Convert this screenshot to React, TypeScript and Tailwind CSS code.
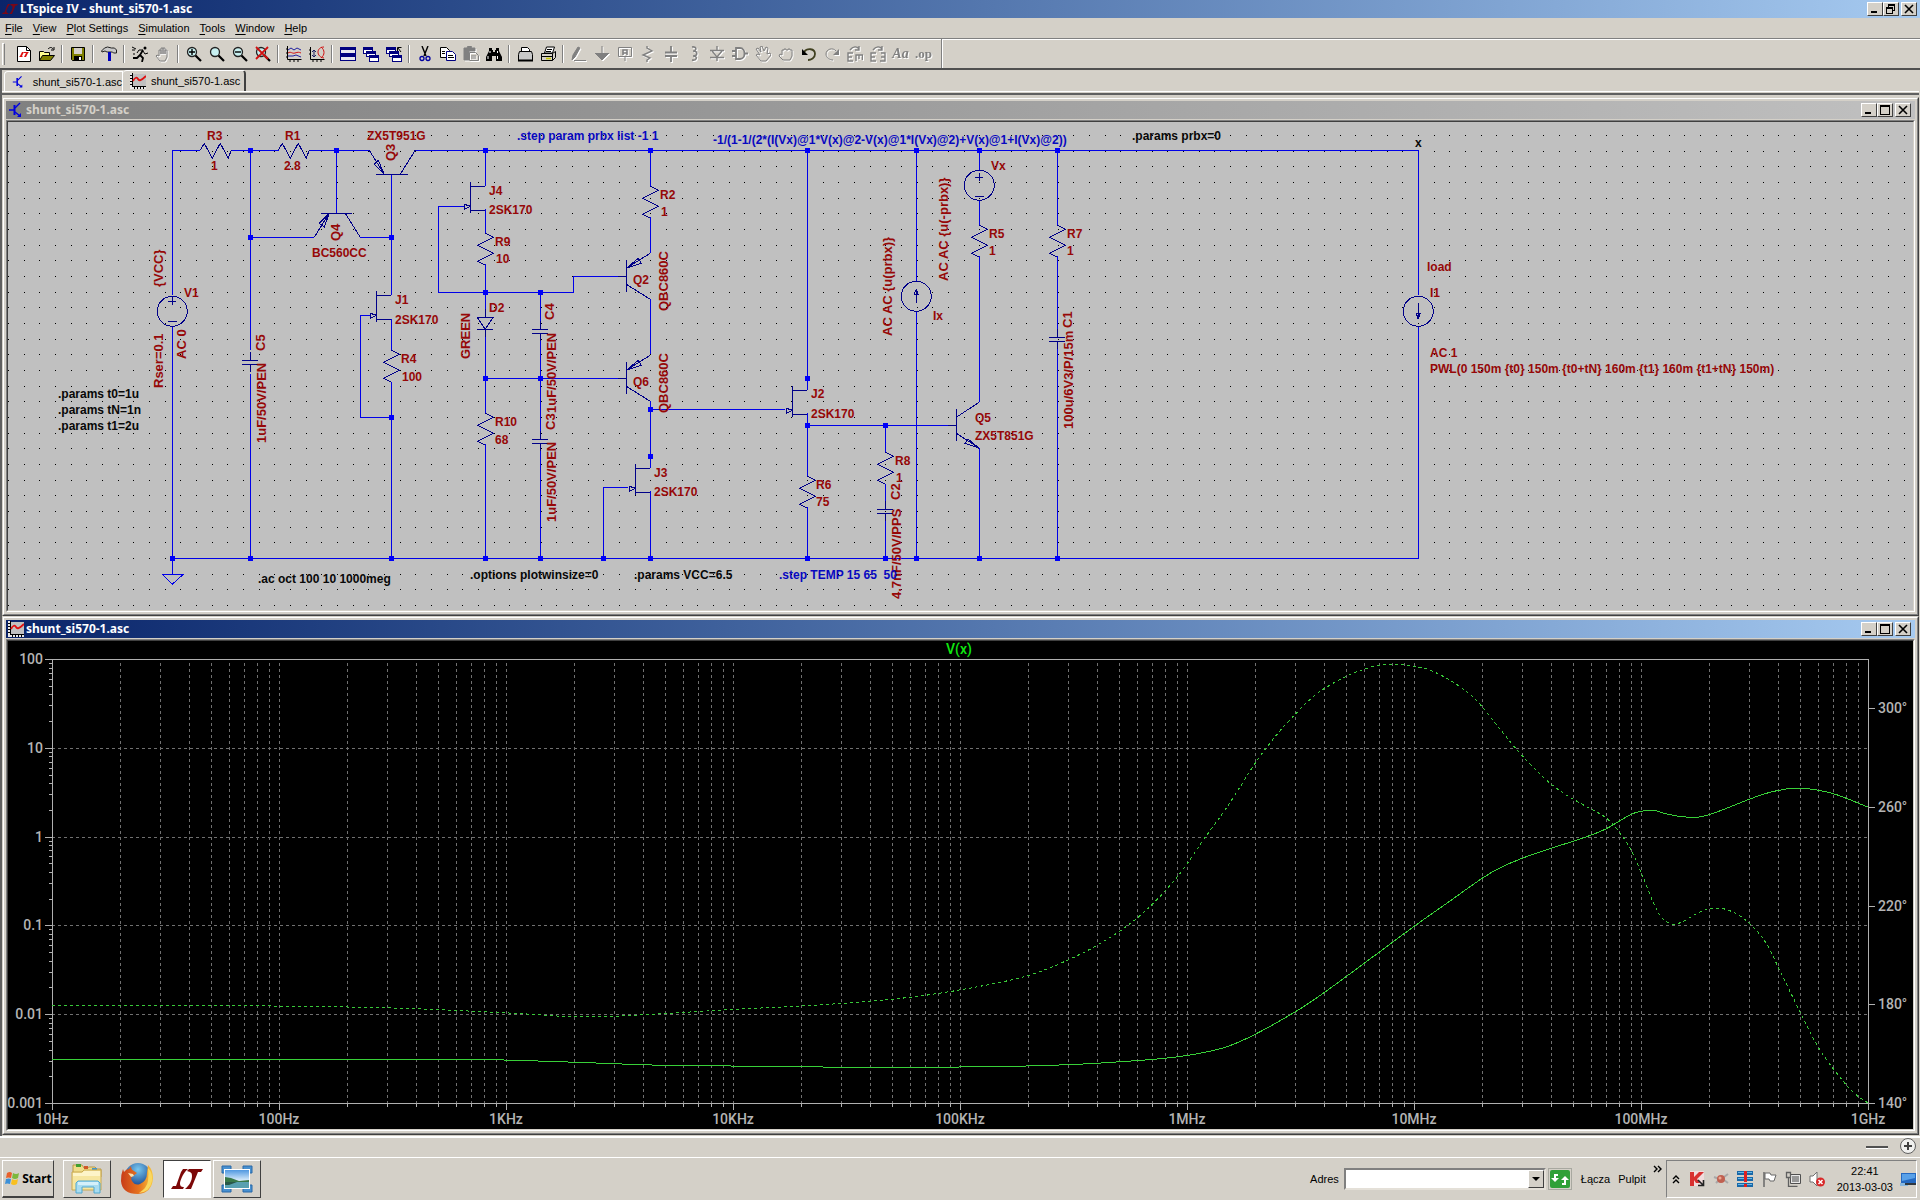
import React from "react";

type Pt = [number, number];

/* ---------- chrome ---------- */

const raised =
  "border border-t-white border-l-white border-r-[#404040] border-b-[#404040] bg-[#d4d0c8]";

function WindowButtons() {
  const cls = `${raised} flex h-[14px] w-4 items-center justify-center`;
  return (
    <div className="flex items-center">
      <button type="button" aria-label="Minimize" className={cls}>
        <svg width="12" height="10" shapeRendering="crispEdges"><path d="M2 7h6v2h-6z" /></svg>
      </button>
      <button type="button" aria-label="Maximize" className={cls}>
        <svg width="12" height="10" shapeRendering="crispEdges">
          <path d="M1 0h10v10h-10zM2 2v7h8v-7z" fillRule="evenodd" />
        </svg>
      </button>
      <button type="button" aria-label="Close" className={`${cls} ml-0.5`}>
        <svg width="12" height="10"><path d="M2 1l8 8M10 1l-8 8" stroke="#000" strokeWidth="1.6" /></svg>
      </button>
    </div>
  );
}

function RestoreButtons() {
  const cls = `${raised} flex h-[14px] w-4 items-center justify-center`;
  return (
    <div className="flex items-center">
      <button type="button" aria-label="Minimize application" className={cls}>
        <svg width="12" height="10" shapeRendering="crispEdges"><path d="M2 7h6v2h-6z" /></svg>
      </button>
      <button type="button" aria-label="Restore application" className={cls}>
        <svg width="12" height="10" shapeRendering="crispEdges">
          <path d="M3 0h7v7h-2v-1h1v-4h-5v1h-1zM1 3h7v7h-7zM2 5v4h5v-4z" fillRule="evenodd" />
        </svg>
      </button>
      <button type="button" aria-label="Close application" className={`${cls} ml-0.5`}>
        <svg width="12" height="10"><path d="M2 1l8 8M10 1l-8 8" stroke="#000" strokeWidth="1.6" /></svg>
      </button>
    </div>
  );
}

function LtLogo({ size, color }: { size: number; color: string }) {
  return (
    <svg width={size} height={size} viewBox="0 0 32 32" fill={color}>
      <path d="M12 6h5C13 9 10 15 9 20c0 3 1 4 4 4l-1 2H0l2-3h3L10 9z" />
      <path d="M18 6h14l-2 3h-3l-7 17h-6c5-4 7-9 7-13 0-3-1-4-5-5z" />
    </svg>
  );
}

function TransistorIcon() {
  return (
    <svg width="16" height="16" viewBox="0 0 16 16" stroke="#0000e0" fill="none" strokeWidth="1.4">
      <path d="M1 8h5M12 1L7 6M7 10l5 4" />
      <path d="M6.500 3v10" strokeWidth="2" />
      <path d="M13 15v-4l-4 4z" fill="#0000e0" stroke="none" />
    </svg>
  );
}

function WaveIcon() {
  return (
    <svg width="16" height="16" viewBox="0 0 16 16">
      <path d="M2 1h14v12H2z" fill="#c0c0c0" />
      <path d="M0 0h2v13H0zM0 13h16v3H0z" fill="#e8e8e8" />
      <path d="M2.500 0v13.500h14M0 2.500h2M0 5.500h2M0 8.500h2M0 11.500h2M4.500 13v3M7.500 13v3M10.500 13v3M13.500 13v3" stroke="#000" fill="none" shapeRendering="crispEdges" />
      <path d="M3 8c2-4 4-4 5-2s3 2 8-3" stroke="#e01010" strokeWidth="1.800" fill="none" />
    </svg>
  );
}

const menus = ["File", "View", "Plot Settings", "Simulation", "Tools", "Window", "Help"];

/* ---------- toolbar ---------- */

const lens = (
  <>
    <circle cx="6" cy="6" r="4.500" fill="#c8f0f0" stroke="#222" strokeWidth="1.300" />
    <path d="M9.500 9.500l5.500 5.500" stroke="#000" strokeWidth="2.200" />
  </>
);

const cascade = (
  <g shapeRendering="crispEdges">
    <path d="M0 1h10v7H0zM3 5h10v6H3zM6 9h10v7H6z" fill="#000080" />
    <path d="M1 4h2v3H1zM4 8h2v2H4zM7 12h8v3H7z" fill="#fff" />
    <path d="M3 4h6v1H3zM6 8h6v1H6z" fill="#fff" />
  </g>
);

const hand = "M5 15l-4-5 1-1 2 1V4h2v4-6h2v6-6h2v6-4h2v7l-2 4z";

type Tool = { name: string; art?: React.ReactNode; off?: boolean };

const tools: (Tool | null)[] = [
  {
    name: "New schematic",
    art: (
      <>
        <path d="M1.500.5h9l4 4v11h-13z" fill="#fff" stroke="#000" />
        <path d="M10.500.5v4h4" fill="none" stroke="#000" />
        <path d="M6 6h2l-2 4h1l-1 1H3l1-1zM8 6h5l-1 1-2 4H8l2-4H8z" fill="#e01010" />
      </>
    ),
  },
  {
    name: "Open",
    art: (
      <>
        <path d="M.5 14.500v-9h4l1 1h5v3" fill="#ffff90" stroke="#000" />
        <path d="M.5 14.500l3-5h12l-4 5z" fill="#808000" stroke="#000" />
        <path d="M9 3c2-2 4-2 5 0M15 1v3h-3" fill="none" stroke="#000" />
      </>
    ),
  },
  null,
  {
    name: "Save",
    art: (
      <>
        <path d="M1.500 1.500h13v13h-12l-1-1z" fill="#808000" stroke="#000" />
        <path d="M4 2h8v6H4z" fill="#d4d0c8" />
        <path d="M4 10h8v4H4z" fill="#000" />
        <path d="M9 11h2v3H9z" fill="#fff" />
      </>
    ),
  },
  null,
  {
    name: "Control panel",
    art: (
      <>
        <path d="M.5 5l3-3 3-1 4 1h3l2 2v3h-3l-1-1H6L4 5 1 6z" fill="#c8c8c8" stroke="#222" />
        <path d="M7 6h3v9H7z" fill="#0000c0" />
      </>
    ),
  },
  null,
  {
    name: "Run",
    art: (
      <>
        <circle cx="13" cy="2" r="1.500" fill="#000" />
        <path d="M11 4L8 9l3 3-1 4M8 9l-3 3H1" fill="none" stroke="#000" strokeWidth="1.800" />
        <path d="M11 4L7 4 5 7M11 5l2 3 3-1M0 1l4 2M0 4h3M1 8h2" fill="none" stroke="#000" />
      </>
    ),
  },
  { name: "Halt", off: true, art: <path d={hand} /> },
  null,
  { name: "Zoom in", art: <>{lens}<path d="M3 6h6M6 3v6" stroke="#000" strokeWidth="1.400" /></> },
  { name: "Pan", art: lens },
  { name: "Zoom back", art: <>{lens}<path d="M3 6h6" stroke="#000" strokeWidth="1.400" /></> },
  { name: "Zoom full extents", art: <>{lens}<path d="M1 1l12 12M13 1L1 13" stroke="#d01010" strokeWidth="1.800" /></> },
  null,
  {
    name: "Autorange",
    art: (
      <g fill="none">
        <path d="M1.500 0v13.500h14M0 3h2M0 7h2M0 11h2M4 13v3M8 13v3M12 13v3" stroke="#000" />
        <path d="M2 4l3-2 3 2 3-2 4 2" stroke="#2020a0" />
        <path d="M2 7c3-2 4 1 7 0s4-1 6 0" stroke="#d01010" />
        <path d="M2 10h5l3-1 5 2" stroke="#2020a0" />
      </g>
    ),
  },
  {
    name: "Plot settings",
    art: (
      <g fill="none">
        <path d="M1.500 1v12.500h14M0 4h2M0 8h2M4 13v3M8 13v3M12 13v3" stroke="#000" />
        <path d="M5 4v7M3 6l2-2 2 2M3 9l2 2 2-2" stroke="#202060" />
        <path d="M15 1c-8 0-8 10 0 11M12 1c4 3 4 8 0 11" stroke="#d01010" />
      </g>
    ),
  },
  null,
  {
    name: "Tile windows",
    art: (
      <g shapeRendering="crispEdges">
        <path d="M0 1h16v14H0z" fill="#000080" />
        <path d="M1 4h14v3H1zM1 11h14v3H1z" fill="#e8e8f0" />
      </g>
    ),
  },
  { name: "Cascade windows", art: cascade },
  { name: "Close all windows", art: <>{cascade}<path d="M15 6l-3-4M11.500 5V1.500h4" stroke="#000" fill="none" /></> },
  null,
  {
    name: "Cut",
    art: (
      <g fill="none">
        <path d="M5 0l4 10M11 0L7 10" stroke="#000" strokeWidth="1.400" />
        <circle cx="5" cy="12.500" r="2" stroke="#0000a0" strokeWidth="1.300" />
        <circle cx="11" cy="12.500" r="2" stroke="#0000a0" strokeWidth="1.300" />
      </g>
    ),
  },
  {
    name: "Copy",
    art: (
      <g fill="#fff" stroke="#000">
        <path d="M.5 1.500h6l3 3v7h-9z" />
        <path d="M6.500 5.500h6l3 3v6h-9z" stroke="#000080" />
        <path d="M8 9.500h5M8 11.500h6M2 5.500h3M2 7.500h3" />
      </g>
    ),
  },
  {
    name: "Paste",
    off: true,
    art: (
      <>
        <path d="M1 2h3l1-2h3l1 2h3v3H6v9H1z" fill="#808080" />
        <path d="M6.500 6.500h6l3 3v5h-9zM8 10h5M8 12h5" />
      </>
    ),
  },
  {
    name: "Find",
    art: (
      <>
        <path d="M3 2h3v2h1v2h2V4h1V2h3v3l3 6v4h-6v-5H6v5H0v-4l3-6z" fill="#000" />
        <path d="M4 5v2M11.500 5v2M2 10v3M11.500 10v3" stroke="#fff" />
      </>
    ),
  },
  null,
  {
    name: "Print preview",
    art: (
      <g stroke="#000" fill="#fff">
        <path d="M4.500 5.500v-4h6l2 2v2" />
        <path d="M2.500 5.500h12l1 3v6h-14v-6z" fill="#c8c8c8" />
        <path d="M1 14.500h15" strokeWidth="2" />
      </g>
    ),
  },
  {
    name: "Print",
    art: (
      <g stroke="#000" fill="#fff">
        <path d="M4.500 7l2-6h8l-2 6z" />
        <path d="M1.500 7.500h11l3-2v6l-3 3h-11z" fill="#d4d0c8" />
        <path d="M1 10.500h12M7 3.500h5M6 5.500h5M12.500 7.500v7" />
        <path d="M6 12.500h5" stroke="#c8c800" strokeWidth="1.600" />
      </g>
    ),
  },
  null,
  { name: "Wire", off: true, art: <><path d="M1 14l1-5 5-8 2 1-5 9z" fill="#808080" /><path d="M3 14.500h12" /></> },
  { name: "Ground", off: true, art: <><path d="M8 0v8M1 7.500h14" /><path d="M2 8h12l-6 6z" fill="#808080" /></> },
  { name: "Label net", off: true, art: <><path d="M1.500 1.500h13v9h-13zM8 11v4" /><path d="M6 9V4h4v5M6 7h4" strokeWidth="1.600" /></> },
  { name: "Resistor", off: true, art: <path d="M7 0v2l5 3-9 4 7 3-3 2v2" strokeWidth="1.400" /> },
  { name: "Capacitor", off: true, art: <path d="M8 0v6M8 10v6M2 6.500h12M2 10h12" strokeWidth="1.800" /> },
  { name: "Inductor", off: true, art: <path d="M6 1c5-1 5 4 1 4 5 0 5 5 0 5 5 0 4 5-1 4" strokeWidth="1.600" /> },
  { name: "Diode", off: true, art: <path d="M8 0v4M1 4.500h14M3 5l5 6 5-6M1 11.500h14M8 11v4" strokeWidth="1.400" /> },
  { name: "Component", off: true, art: <path d="M0 5h4M0 10h4M4 2h4c6 0 6 11 0 11H4zM12 7.500h4" strokeWidth="1.800" /> },
  { name: "Move", off: true, art: <path d="M6 15L1 9l2-1 2 1-4-6 2-1 3 4-1-5 2-1 2 5 2-4 2 1-1 6 3-1 1 2-5 6z" /> },
  { name: "Drag", off: true, art: <path d="M5 14l-4-4 1-2 2 1V4h2V3h2v1h2V3h2v1h2v6l-2 4z" /> },
  {
    name: "Undo",
    art: <><path d="M3 6c3-4 11-4 11 2 0 4-4 6-7 6" stroke="#404020" strokeWidth="1.800" fill="none" /><path d="M1 3v6h6z" fill="#000" /></>,
  },
  { name: "Redo", off: true, art: <><path d="M12 5C9 1 2 3 2 8c0 4 4 6 7 6" /><path d="M15 3v6H9z" fill="#808080" stroke="none" /></> },
  { name: "Rotate", off: true, art: <path d="M6 7H1v8h5M1 11h4M9 15V9h7M12 9v4M15.500 9v5M3 4c3-4 7-4 9-1M12 0v4H8" strokeWidth="1.400" /> },
  { name: "Mirror", off: true, art: <path d="M6 7H1v8h5M1 11h4M11 7h4v8h-5M15 11h-4M3 4c3-4 7-4 9-1M12 0v4H8" strokeWidth="1.400" /> },
  { name: "Text" },
  { name: "SPICE directive" },
];

function Toolbar() {
  return (
    <div className="flex h-8 items-center border-t border-t-[#808080] border-b-2 border-b-[#505050] pl-0.5 shadow-[inset_0_1px_0_#ffffff]">
      <span className="h-[22px] w-[3px] border-t border-r border-l border-t-white border-r-[#808080] border-l-white" />
      <span className="w-[7px]" />
      {tools.map((t, i) =>
        t === null ? (
          <span key={i} className="flex w-2 justify-center">
            <span className="h-[18px] w-0.5 border-l border-r border-l-[#808080] border-r-white" />
          </span>
        ) : (
          <button key={i} type="button" aria-label={t.name} disabled={t.off} className="flex h-[23px] w-[23px] items-center justify-center">
            {t.name === "Text" ? (
              <span className="font-['Liberation_Serif'] text-[14px] leading-4 font-bold text-[#808080] italic drop-shadow-[1px_1px_0_#fff]">Aa</span>
            ) : t.name === "SPICE directive" ? (
              <span className="font-['Liberation_Serif'] text-[13px] leading-4 font-bold text-[#808080] drop-shadow-[1px_1px_0_#fff]">.op</span>
            ) : t.off ? (
              <svg width="16" height="16" fill="none" stroke="#808080" className="drop-shadow-[1px_1px_0_#fff]">{t.art}</svg>
            ) : (
              <svg width="16" height="16">{t.art}</svg>
            )}
          </button>
        ),
      )}
      <span className="ml-1.5 h-full w-0.5 border-l border-r border-l-[#808080] border-r-white" />
    </div>
  );
}

/* ---------- schematic ---------- */

const gridDots = (() => {
  let d = "";
  for (let r = 0; r < 31; r++)
    for (let c = 0; c < 122; c++) d += `M${Math.round(8 + (c * 47) / 3)} ${Math.round(135 + (r * 47) / 3)}h1`;
  return d;
})();

const wires = [
  "M172 295V150H200M231 150H279M309 150H369M415 150H1418V295M1418 326V558H172V326M172 558V574",
  "M250 150V350M250 374V558M336 150V213M250 237H314M360 237H391M391 174V295M391 319V350M391 382V558",
  "M370 315H360V417H391M485 150V186M464 206H438V292H573V276H618M485 209V233M485 264V309M485 337V413M485 444V558",
  "M540 292V322M540 340V432M540 450V558M485 378H618M650 150V186M650 217V253M650 299V354M650 401V468M650 491V558",
  "M628 487H603V558M650 409H785M807 150V390M807 413V476M807 507V558M807 425H948M885 425V452M885 484V503M885 519V558",
  "M916 150V281M916 311V558M979 150V170M979 200V225M979 256V402M979 448V558M1057 150V225M1057 256V331M1057 348V558",
  "M162 574H183L172 584Z",
].join("");

const vResistors: Pt[] = [[391, 350], [485, 233], [485, 413], [650, 186], [807, 476], [885, 452], [979, 225], [1057, 225]];
const hResistors: Pt[] = [[200, 150], [278, 150]];
const capacitors: Pt[] = [[250, 360], [540, 329], [540, 439], [885, 509], [1057, 337]];
const jfets: Pt[] = [[391, 295], [485, 186], [650, 468], [807, 390]];
const pnps: Pt[] = [[626, 276], [626, 378]];

const symbols = [
  ...vResistors.map(([x, y]) => `M${x} ${y}l8 4-16 8 16 8-16 8 8 4`),
  ...hResistors.map(([x, y]) => `M${x} ${y}l4-7 8 15 8-15 8 15 3-8`),
  ...capacitors.map(([x, y]) => `M${x} ${y - 8}v8M${x - 8} ${y}h16M${x - 8} ${y + 4}h16M${x} ${y + 4}v8`),
  ...jfets.map(([x, y]) => `M${x} ${y}h-15M${x - 15} ${y - 4}v31M${x - 15} ${y + 24}h15M${x - 21} ${y + 18}v5l6-3z`),
  ...pnps.map(([x, y]) => `M${x - 8} ${y}h8M${x} ${y - 16}v32M${x + 24} ${y - 23}l-24 15 12-10 3 5-15 5M${x} ${y + 8}l24 15`),
  "M369 150L384 174L374 164L378 160L384 174M376 174H408M400 174L415 150",
  "M314 237L329 213L319 223L324 227L329 213M321 213H352M345 213L360 237",
  "M948 425H956M956 409V441M979 402L956 417M956 433L979 448L965 443L968 439L979 448",
  "M477 317H493L485 329ZM477 329H493M485 309V317M485 329V337",
  "M172 297V305M168 301H176M168 321H177M979 173V181M975 177H983M975 196H984",
  "M916 303V289L914 294H918L916 289M1418 303V319L1416 313H1420L1418 319",
].join("");

const circles: Pt[] = [[172, 311], [979, 185], [916, 296], [1418, 311]];

const junctions: Pt[] = [
  ...[250, 336, 485, 650, 807, 916, 979, 1057].map((x): Pt => [x, 150]),
  ...[172, 250, 391, 485, 540, 603, 650, 807, 885, 916, 979, 1057].map((x): Pt => [x, 558]),
  [250, 237], [391, 237], [391, 417], [485, 292], [540, 292], [485, 378], [540, 378],
  [650, 409], [650, 456], [807, 378], [807, 425], [885, 425],
];

const labels: [string, number, number][] = [
  ["R3", 207, 140], ["1", 211, 170], ["R1", 285, 140], ["2.8", 284, 170], ["ZX5T951G", 367, 140],
  ["BC560CC", 312, 257], ["V1", 184, 297], ["J1", 395, 304], ["2SK170", 395, 324], ["R4", 401, 363],
  ["100", 402, 381], ["J4", 489, 195], ["2SK170", 489, 214], ["R9", 495, 246], ["10", 496, 263],
  ["D2", 489, 312], ["R10", 495, 426], ["68", 495, 444], ["Q2", 633, 284], ["Q6", 633, 386],
  ["R2", 660, 199], ["1", 661, 216], ["J3", 654, 477], ["2SK170", 654, 496], ["J2", 811, 398],
  ["2SK170", 811, 418], ["R6", 816, 489], ["75", 816, 506], ["R8", 895, 465], ["1", 896, 482],
  ["Ix", 933, 320], ["Vx", 991, 170], ["R5", 989, 238], ["1", 989, 255], ["R7", 1067, 238],
  ["1", 1067, 255], ["Q5", 975, 422], ["ZX5T851G", 975, 440], ["load", 1427, 271], ["I1", 1430, 297],
  ["AC 1", 1430, 357], ["PWL(0 150m {t0} 150m {t0+tN} 160m {t1} 160m {t1+tN} 150m)", 1430, 373],
];

const upright: [string, number, number][] = [
  ["Q3", 395, 161], ["Q4", 340, 241], ["{VCC}", 163, 287], ["Rser=0.1", 163, 388], ["AC 0", 186, 359],
  ["C5", 265, 351], ["1uF/50V/PEN", 266, 443], ["C4", 554, 320], ["GREEN", 470, 359],
  ["1uF/50V/PEN", 556, 413], ["C3", 555, 430], ["1uF/50V/PEN", 556, 522], ["QBC860C", 668, 311],
  ["QBC860C", 668, 413], ["AC AC {u(prbx)}", 892, 336], ["AC AC {u(-prbx)}", 948, 281], ["C1", 1072, 328],
  ["100u/6V3/P/15m", 1073, 429], ["C2", 900, 500], ["4.7nF/50V/PPS", 901, 599],
];

const directives: [string, number, number][] = [
  [".params t0=1u", 58, 398], [".params tN=1n", 58, 414], [".params t1=2u", 58, 430],
  [".ac oct 100 10 1000meg", 258, 583], [".options plotwinsize=0", 470, 579], [".params VCC=6.5", 634, 579],
  [".params prbx=0", 1132, 140], ["x", 1415, 147],
];

const comments: [string, number, number][] = [
  [".step param prbx list -1 1", 517, 140],
  ["-1/(1-1/(2*(I(Vx)@1*V(x)@2-V(x)@1*I(Vx)@2)+V(x)@1+I(Vx)@2))", 713, 144],
  [".step TEMP 15 65 \u00a050", 779, 579],
];

function Schematic() {
  const text = (items: [string, number, number][]) =>
    items.map(([s, x, y]) => <text key={`${s}${x}${y}`} x={x} y={y}>{s}</text>);
  return (
    <svg viewBox="8 122 1905 488" className="block h-auto w-full bg-[#c0c0c0] font-['Liberation_Sans',sans-serif] text-[12px] font-bold" role="img" aria-label="Schematic">
      <g transform="translate(0.25 0.25)" fill="none" shapeRendering="crispEdges">
        <path d={gridDots} stroke="#000" />
        <path d={wires} stroke="#0000e8" />
        <path d={symbols} stroke="#000088" />
        {circles.map(([x, y]) => <circle key={x} cx={x} cy={y} r="15" stroke="#000088" />)}
        {junctions.map(([x, y]) => <path key={`${x}-${y}`} d={`M${x - 2} ${y}h5`} stroke="#0000f8" strokeWidth="5" />)}
      </g>
      <g fill="#960808">{text(labels)}</g>
      <g fill="#960808" className="text-[13px]">
        {upright.map(([s, x, y]) => <text key={`${s}${x}${y}`} transform={`translate(${x} ${y}) rotate(-90)`}>{s}</text>)}
      </g>
      <g fill="#080808">{text(directives)}</g>
      <g fill="#0808c0">{text(comments)}</g>
    </svg>
  );
}

/* ---------- plot ---------- */

const magnitude: Pt[] = [
  [52, 1059], [294, 1059], [450, 1059], [514, 1060], [575, 1062], [661, 1065], [760, 1066], [845, 1067], [940, 1067],
  [1016, 1066], [1078, 1064], [1127, 1061], [1165, 1058], [1200, 1053], [1228, 1046], [1255, 1034], [1296, 1011],
  [1323, 993], [1364, 963], [1414, 926], [1448, 902], [1482, 878], [1499, 868], [1522, 858], [1551, 848], [1582, 838],
  [1605, 829], [1631, 814], [1641, 811], [1653, 810], [1664, 813], [1678, 816], [1697, 817], [1710, 814], [1729, 807],
  [1749, 799], [1770, 792], [1793, 788], [1812, 789], [1835, 794], [1868, 807],
];

const phase: Pt[] = [
  [52, 1005], [170, 1005], [294, 1006], [400, 1008], [514, 1013], [563, 1016], [612, 1016], [686, 1012], [735, 1009],
  [796, 1006], [857, 1002], [918, 996], [980, 986], [1029, 975], [1065, 961], [1102, 942], [1139, 916], [1176, 878],
  [1205, 837], [1228, 805], [1255, 763], [1276, 735], [1296, 713], [1310, 699], [1323, 689], [1346, 676], [1364, 669],
  [1379, 665], [1398, 664], [1414, 666], [1430, 670], [1453, 682], [1476, 700], [1499, 728], [1517, 750], [1540, 774],
  [1551, 784], [1568, 796], [1582, 804], [1605, 817], [1616, 828], [1631, 850], [1642, 875], [1653, 902], [1662, 918],
  [1673, 924], [1683, 921], [1697, 913], [1708, 909], [1720, 908], [1733, 912], [1749, 923], [1766, 943], [1778, 967],
  [1800, 1012], [1818, 1047], [1835, 1071], [1853, 1092], [1868, 1103],
];

function smooth(p: Pt[]) {
  let d = `M${p[0][0]} ${p[0][1]}`;
  const slope = (i: number) => {
    const a = p[Math.max(0, i - 1)];
    const b = p[Math.min(p.length - 1, i + 1)];
    return (b[1] - a[1]) / (b[0] - a[0]);
  };
  for (let i = 0; i < p.length - 1; i++) {
    const h = (p[i + 1][0] - p[i][0]) / 3;
    d += `C${p[i][0] + h} ${p[i][1] + h * slope(i)} ${p[i + 1][0] - h} ${p[i + 1][1] - h * slope(i + 1)} ${p[i + 1][0]} ${p[i + 1][1]}`;
  }
  return d;
}

const freq = ["10Hz", "100Hz", "1KHz", "10KHz", "100KHz", "1MHz", "10MHz", "100MHz", "1GHz"];
const gains = ["100", "10", "1", "0.1", "0.01", "0.001"];
const degrees = ["300°", "260°", "220°", "180°", "140°"];

const LEFT = 52, RIGHT = 1868, TOP = 659, BOTTOM = 1103;
const DX = (RIGHT - LEFT) / 8;
const DY = (BOTTOM - TOP) / 5;

const plotPaths = (() => {
  let vertical = "", horizontal = "", ticks = "";
  for (let d = 0; d <= 8; d++) {
    const x0 = LEFT + d * DX;
    ticks += `M${x0} ${BOTTOM}v7`;
    if (d > 0 && d < 8) vertical += `M${x0} ${TOP + 4}V${BOTTOM}`;
    if (d < 8)
      for (let m = 2; m < 10; m++) {
        const x = Math.round(x0 + DX * Math.log10(m));
        vertical += `M${x} ${TOP + 4}V${BOTTOM}`;
        ticks += `M${x} ${BOTTOM}v4`;
      }
  }
  for (let d = 0; d <= 5; d++) {
    const y0 = Math.round(TOP + d * DY);
    ticks += `M${LEFT} ${y0}h-7`;
    if (d > 0 && d < 5) horizontal += `M${LEFT} ${y0}H${RIGHT}`;
    if (d > 0) for (let m = 2; m < 10; m++) ticks += `M${LEFT} ${Math.round(TOP + d * DY - DY * Math.log10(m))}h-3`;
  }
  for (let i = 0; i < 5; i++) ticks += `M${RIGHT} ${Math.round(708 + i * 98.75)}h7`;
  return { vertical, horizontal, ticks };
})();

function Plot() {
  return (
    <svg viewBox="8 641 1905 488" className="block h-auto w-full bg-black font-[Roboto,sans-serif] text-[14px] font-medium" role="img" aria-label="Frequency response of V(x)">
      <g transform="translate(0.25 0.25)" fill="none" shapeRendering="crispEdges">
        <path d={plotPaths.vertical} stroke="#707070" strokeDasharray="3 3" />
        <path d={plotPaths.horizontal} stroke="#707070" strokeDasharray="3 3" />
        <path d={`M${LEFT} ${TOP}H${RIGHT}V${BOTTOM}H${LEFT}Z`} stroke="#b0b0b0" />
        <path d={plotPaths.ticks} stroke="#b0b0b0" />
        <path d={smooth(phase)} stroke="#38c838" strokeDasharray="3 3" />
        <path d={smooth(magnitude)} stroke="#38d038" />
      </g>
      <g fill="#b4b4b4">
        {gains.map((g, i) => <text key={g} x="43" y={664 + Math.round(i * DY)} textAnchor="end">{g}</text>)}
        {degrees.map((g, i) => <text key={g} x="1878" y={713 + Math.round(i * 98.75)}>{g}</text>)}
        {freq.map((f, i) => <text key={f} x={LEFT + i * DX} y="1124" textAnchor="middle">{f}</text>)}
      </g>
      <text x="959" y="654" textAnchor="middle" fill="#10e810">V(x)</text>
    </svg>
  );
}

function ChildWindow({ active, icon, children }: { active?: boolean; icon: React.ReactNode; children: React.ReactNode }) {
  return (
    <section className="border border-t-[#d4d0c8] border-r-[#404040] border-b-[#404040] border-l-[#d4d0c8]">
      <div className="border border-t-white border-r-[#808080] border-b-[#808080] border-l-white bg-[#d4d0c8] p-0.5">
        <header className={active
          ? "flex h-[18px] items-center justify-between bg-linear-to-r from-[#0a246a] to-[#a6caf0] pr-1 pl-0.5 text-white"
          : "flex h-[18px] items-center justify-between bg-linear-to-r from-[#808080] to-[#c0c0c0] pr-1 pl-0.5 text-[#d4d0c8]"}>
          <h2 className="flex items-center gap-0.5 font-['Noto_Sans',sans-serif] text-[12px] font-bold">{icon}<span>shunt_si570-1.asc</span></h2>
          <WindowButtons />
        </header>
        <div className="mt-px border border-t-[#808080] border-r-white border-b-white border-l-[#808080]">
          <div className="border border-t-[#404040] border-r-[#d4d0c8] border-b-[#d4d0c8] border-l-[#404040]">{children}</div>
        </div>
      </div>
    </section>
  );
}

/* ---------- taskbar ---------- */

function FlagLogo() {
  return (
    <svg width="16" height="16" viewBox="0 0 16 16">
      <path d="M3 2q3-2 5 0L7 7Q4 6 2 7z" fill="#e8602c" />
      <path d="M9 2q3 2 6 0l-1 5q-3 2-6 0z" fill="#7cb83c" />
      <path d="M2 8q3-1 5 0l-1 5q-3-1-5 0z" fill="#3c90d8" />
      <path d="M8 8q3 2 6 0l-1 5q-3 2-6 0z" fill="#f8c020" />
    </svg>
  );
}

function ExplorerIcon() {
  return (
    <svg width="34" height="32" viewBox="0 0 34 32">
      <path d="M3 2h9l2 3h3l2-1h6l2 2h4v8H3z" fill="#f0dc88" stroke="#b89848" />
      <path d="M6 1h5v3H6z" fill="#40a030" /><path d="M14 3h4v3h-4z" fill="#d05828" /><path d="M22 5h5v3h-5z" fill="#4898c8" />
      <path d="M2 9h10l2-2h17v20H2z" fill="#f6e6a0" stroke="#c8a850" />
      <path d="M3 10h9l2-2h16v5H3z" fill="#fdf4c8" />
      <path d="M6 20l2-2h20l2 2v10h-6v-6h-12v6H6z" fill="#a8dcf0" stroke="#50a8d0" />
      <path d="M8 19h20v3H8z" fill="#d4f0fa" />
    </svg>
  );
}

function FirefoxIcon() {
  return (
    <svg width="34" height="34" viewBox="0 0 34 34">
      <defs>
        <radialGradient id="globe" cx=".5" cy=".25" r=".7"><stop offset="0" stopColor="#78c8f0" /><stop offset="1" stopColor="#123c88" /></radialGradient>
        <linearGradient id="fur" x1="0" x2="1"><stop offset="0" stopColor="#c83c18" /><stop offset=".6" stopColor="#e87820" /><stop offset="1" stopColor="#f8c840" /></linearGradient>
      </defs>
      <circle cx="18" cy="14" r="13" fill="url(#globe)" />
      <path d="M3 7l1 3q2-3 5-3l2-3q0 4 3 5l3 2-4 3q-3 2-1 5 3 5 8 3 7-3 7-11l1-8q5 5 5 13-1 15-15 16Q2 32 1 19 1 12 3 7z" fill="url(#fur)" />
      <path d="M28 6q5 5 4 13-2 11-13 12 8-5 9-12 1-7 0-13z" fill="#fad860" />
      <path d="M8 11l5 1 1 2-3 1z" fill="#f8e0b0" />
    </svg>
  );
}

function PictureIcon() {
  return (
    <svg width="32" height="28" viewBox="0 0 32 28">
      <defs>
        <linearGradient id="sky" x1="0" y1="0" x2="0" y2="1"><stop offset="0" stopColor="#5098e0" /><stop offset="1" stopColor="#e0f0fc" /></linearGradient>
      </defs>
      <path d="M1 1h9v7H1zM22 1h9v7h-9zM1 20h9v7H1zM22 20h9v7h-9z" fill="#4890d0" stroke="#2868a8" />
      <path d="M3 4h26v20H3z" fill="#fff" />
      <path d="M4 5h24v11H4z" fill="url(#sky)" />
      <path d="M4 12l6 1 8 3 10-1v3H4z" fill="#387848" />
      <path d="M4 17h24v6H4z" fill="#58a0b0" />
      <path d="M4 17h12l-8 3H4z" fill="#285848" />
    </svg>
  );
}

const trayIcons: { name: string; art: React.ReactNode }[] = [
  { name: "Kaspersky", art: <><path d="M1 0h14v15H1z" fill="#f0dcdc" /><path d="M1 1h4v5l5-5h5L8 8l3 4H7L5 9v6H1z" fill="#d83030" /><path d="M9 9l5 5M14.500 9v5.500H9" stroke="#222" strokeWidth="1.600" fill="none" /></> },
  { name: "Process monitor", art: <><path d="M1 6l5 2M11 9l4 3M11 6l4-3M3 12l3-3" stroke="#a8a8a8" strokeWidth="2" /><circle cx="8" cy="8" r="4" fill="#c06050" /><circle cx="7" cy="7" r="1.500" fill="#f0a890" /></> },
  { name: "Storage", art: <><path d="M0 0h16v4H0zM0 6h16v4H0zM0 12h16v4H0z" fill="#1868a8" /><path d="M1 1h14v1H1zM1 7h14v1H1zM1 13h14v1H1z" fill="#68b8e8" /><path d="M7 0h3v11H7zM7 13h3v3H7z" fill="#e02020" /></> },
  { name: "Action center", art: <><path d="M3 1v15" stroke="#686868" strokeWidth="1.500" /><path d="M4 2h5l1 2h5l-2 6H9L8 8H4z" fill="#fff" stroke="#686868" /></> },
  { name: "Network", art: <><path d="M5.500 3.500h10v9h-10z" fill="#e8e8e8" stroke="#505050" /><path d="M7 5h7v6H7z" fill="#989898" /><path d="M1.500 1.500h4v5h-4zM3.500 7v8.500h9" fill="none" stroke="#606060" strokeWidth="1.300" /></> },
  { name: "Volume muted", art: <><path d="M1 5h3l4-4v14l-4-4H1z" fill="#fff" stroke="#707070" /><circle cx="11.500" cy="11" r="4.500" fill="#d82828" /><path d="M9.500 9l4 4M13.500 9l-4 4" stroke="#fff" strokeWidth="1.500" /></> },
];

function Taskbar() {
  return (
    <footer className="flex items-center justify-between border-t border-white pt-0.5 pr-[3px] pb-0.5 pl-0.5">
      <div className="flex items-center">
        <button type="button" className={`${raised} mr-[9px] flex h-[38px] w-[52px] items-center justify-center gap-0.5 border-b-2 font-['Noto_Sans',sans-serif] text-[12px] font-bold`}>
          <FlagLogo />Start
        </button>
        <button type="button" aria-label="Windows Explorer" className={`${raised} flex h-[38px] w-12 items-center justify-center`}><ExplorerIcon /></button>
        <button type="button" aria-label="Firefox" className="flex h-[38px] w-[52px] items-center justify-center"><FirefoxIcon /></button>
        <button type="button" aria-label="LTspice IV" className="mr-0.5 flex h-[38px] w-12 items-center justify-center border border-t-[#404040] border-r-white border-b-white border-l-[#404040] bg-white">
          <LtLogo size={32} color="#7c0808" />
        </button>
        <button type="button" aria-label="Image viewer" className={`${raised} flex h-[38px] w-12 items-center justify-center`}><PictureIcon /></button>
      </div>
      <div className="flex items-center">
        <label htmlFor="address" className="mr-[5px]">Adres</label>
        <div className="flex h-[22px] w-[202px] border-2 border-t-[#808080] border-r-[#e4e0d8] border-b-[#e4e0d8] border-l-[#808080] bg-white">
          <input id="address" type="text" className="min-w-0 flex-1 bg-white px-1 outline-none" />
          <button type="button" aria-label="Show addresses" className={`${raised} flex w-4 items-center justify-center`}>
            <svg width="8" height="5"><path d="M0 0h8l-4 4z" /></svg>
          </button>
        </div>
        <button type="button" aria-label="Refresh" className="ml-0.5 flex h-[22px] w-6 items-center justify-center border border-[#a8a8a0]">
          <svg width="20" height="18" viewBox="0 0 20 18">
            <rect width="20" height="18" rx="2" fill="#30a038" />
            <path d="M5 10V5h3" fill="none" stroke="#fff" strokeWidth="2" />
            <path d="M1 8l4 4 4-4zM11 10l4-4 4 4z" fill="#fff" />
            <path d="M15 9v5h-3" fill="none" stroke="#fff" strokeWidth="2" />
          </svg>
        </button>
        <button type="button" className="ml-[9px]">Łącza</button>
        <button type="button" className="ml-2">Pulpit</button>
        <button type="button" aria-label="More toolbars" className="mb-5 ml-[7px] w-[10px]">
          <svg width="10" height="8"><path d="M1 1l3 3-3 3M5 1l3 3-3 3" fill="none" stroke="#000" strokeWidth="1.400" /></svg>
        </button>
        <div className="ml-[3px] flex h-[38px] items-center border border-t-[#808080] border-r-white border-b-white border-l-[#808080] pl-[5px]">
          <button type="button" aria-label="Show hidden icons" className="mr-[9px]">
            <svg width="8" height="10"><path d="M1 5l3-3 3 3M1 9l3-3 3 3" fill="none" stroke="#000" strokeWidth="1.400" /></svg>
          </button>
          <div className="flex gap-2">
            {trayIcons.map((t) => (
              <button key={t.name} type="button" aria-label={t.name} className="w-4"><svg width="16" height="16">{t.art}</svg></button>
            ))}
          </div>
          <time className="ml-3 text-center leading-4" dateTime="2013-03-03T22:41">22:41<br />2013-03-03</time>
          <button type="button" aria-label="Show desktop" className="ml-[7px]">
            <svg width="16" height="16"><path d="M1 2h15v10H1z" fill="#2468c0" /><path d="M2 3h13v4L2 10z" fill="#58a0e8" /><path d="M0 12h8v3H0z" fill="#88b8e0" /><path d="M5 12h11v2H5z" fill="#303840" /></svg>
          </button>
        </div>
      </div>
    </footer>
  );
}

/* ---------- page ---------- */

export default function App() {
  return (
    <div className="flex min-h-screen flex-col bg-[#d4d0c8] font-['Liberation_Sans',sans-serif] text-[11px] leading-4 text-black">
      <header className="flex h-[18px] items-center justify-between bg-linear-to-r from-[#0a246a] to-[#a6caf0] pr-[3px] pl-0.5 text-white">
        <h1 className="flex items-center gap-0.5 font-['Noto_Sans',sans-serif] text-[12px] font-bold"><LtLogo size={16} color="#780818" /><span>LTspice IV - shunt_si570-1.asc</span></h1>
        <RestoreButtons />
      </header>
      <nav className="flex h-5 items-center">
        {menus.map((m) => (
          <button key={m} type="button" className="px-[5px]">
            <span className="underline underline-offset-2">{m[0]}</span>{m.slice(1)}
          </button>
        ))}
      </nav>
      <Toolbar />
      <div className="flex flex-1 flex-col border-l-2 border-l-[#606060] pr-px">
        <div role="tablist" className="flex h-[22px] items-end border-b border-white pl-0.5 whitespace-nowrap">
          <button role="tab" aria-selected="false" type="button" className="flex h-5 w-[119px] items-center gap-2 rounded-tl-sm border-t border-r border-l border-white pl-[7px]">
            <TransistorIcon /><span>shunt_si570-1.asc</span>
          </button>
          <button role="tab" aria-selected="true" type="button" className="flex h-[21px] w-[123px] items-center gap-[5px] rounded-t-sm border-t border-r-2 border-t-white border-r-[#404040] pl-[7px]">
            <WaveIcon /><span>shunt_si570-1.asc</span>
          </button>
        </div>
        <main className="mt-px border-t-2 border-t-[#606060] pt-0.5">
          <ChildWindow icon={<TransistorIcon />}><Schematic /></ChildWindow>
          <ChildWindow active icon={<WaveIcon />}><Plot /></ChildWindow>
        </main>
      </div>
      <div className="flex h-[21px] items-center justify-end gap-3 border-t-2 border-t-white pr-1">
        <span className="h-[3px] w-[22px] border-t-2 border-b border-t-[#505050] border-b-white" />
        <button type="button" aria-label="Add" className="mb-1">
          <svg width="16" height="16"><circle cx="8" cy="8" r="7.500" fill="#f0f0ee" stroke="#606060" /><path d="M8 4v8M4 8h8" stroke="#404040" strokeWidth="2" /></svg>
        </button>
      </div>
      <Taskbar />
    </div>
  );
}
